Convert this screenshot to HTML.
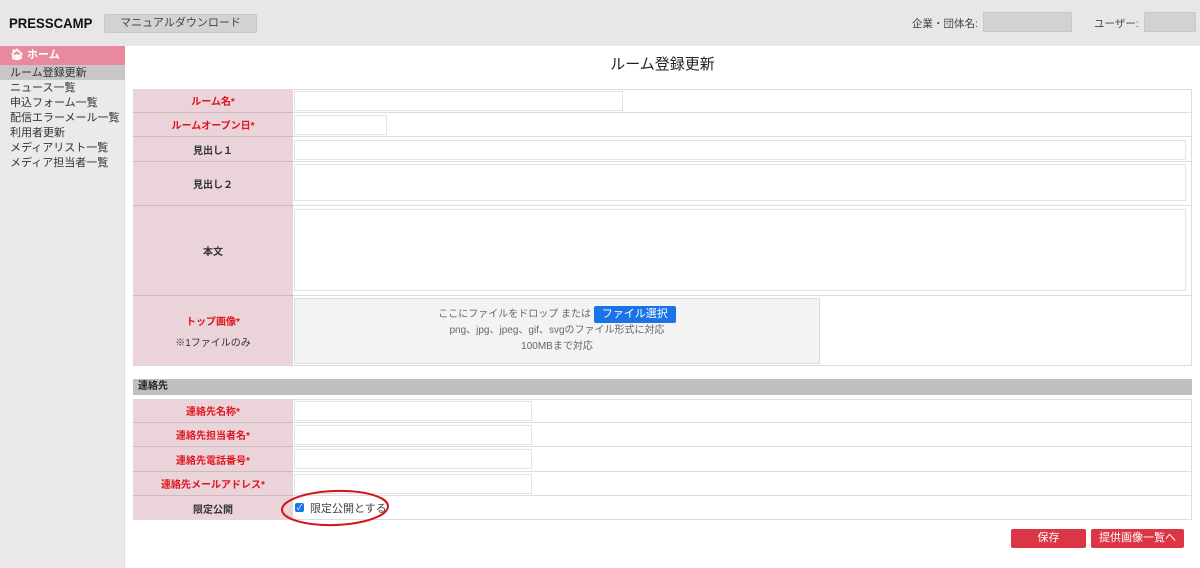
<!DOCTYPE html>
<html><head><meta charset="utf-8"><style>
*{box-sizing:border-box;margin:0;padding:0}
body{width:1200px;height:568px;overflow:hidden;background:#fff;font-family:"Liberation Sans","Noto Sans CJK JP",sans-serif;font-size:11px;color:#333;position:relative}
.a{position:absolute}
.hdr{left:0;top:0;width:1200px;height:46px;background:#e8e6e9}
.side{left:0;top:46px;width:125px;height:522px;background:#ebe9eb;border-right:1px solid #ddd}
.lab{position:absolute;left:133px;width:160px;background:#ead3d9;border-bottom:1px solid #c9bcc0;text-align:center;font-weight:bold;display:flex;align-items:center;justify-content:center;flex-direction:column;font-size:10px;color:#333}
.red{color:#e0141e}
.val{position:absolute;left:293px;width:899px;border-bottom:1px solid #ddd;border-right:1px solid #ddd}
.inp{position:absolute;background:#fff;border:1px solid #e3e3e3}
.btn{position:absolute;top:529px;height:19px;background:#dc3545;color:#fff;font-size:11px;text-align:center;line-height:19px;border-radius:2px}
</style></head><body>
<div class="a hdr"></div>
<div class="a" style="left:9px;top:15px;font-weight:bold;font-size:14px;color:#111;transform:scaleX(0.94);transform-origin:left">PRESSCAMP</div>
<div class="a" style="left:104px;top:14px;width:153px;height:19px;background:#d4d3d4;border:1px solid #c8c8c8;border-radius:2px;text-align:center;line-height:17px;font-size:11px;color:#444">マニュアルダウンロード</div>
<div class="a" style="left:983px;top:12px;width:89px;height:20px;background:#d3d2d3;border:1px solid #c8c8c8"></div>
<div class="a" style="left:1144px;top:12px;width:52px;height:20px;background:#d3d2d3;border:1px solid #c8c8c8"></div>
<div class="a" style="left:912px;top:16px;font-size:10.5px;color:#444;z-index:2">企業・団体名:</div>
<div class="a" style="left:1094px;top:16px;font-size:10.5px;color:#444;z-index:2">ユーザー:</div>

<div class="a side"></div>
<div class="a" style="left:0;top:46px;width:125px;height:19px;background:#e8899f;color:#fff;font-weight:bold;padding-left:10px;line-height:19px;font-size:11px">🏠︎ ホーム</div>
<div class="a" style="left:0;top:65px;width:125px;height:15px;background:#c8c6c8"></div>
<div class="a" style="left:10px;top:66px;line-height:15px;font-size:11px;color:#333">ルーム登録更新<br>ニュース一覧<br>申込フォーム一覧<br>配信エラーメール一覧<br>利用者更新<br>メディアリスト一覧<br>メディア担当者一覧</div>

<div class="a" style="left:125px;top:53px;width:1075px;text-align:center;font-size:15px;color:#222">ルーム登録更新</div>

<div class="a" style="left:133px;top:89px;width:1059px;height:277px;border:1px solid #ddd;border-bottom:none"></div>
<div class="lab red" style="top:89px;height:24px">ルーム名*</div>
<div class="lab red" style="top:113px;height:24px">ルームオープン日*</div>
<div class="lab" style="top:137px;height:25px">見出し１</div>
<div class="lab" style="top:162px;height:44px">見出し２</div>
<div class="lab" style="top:206px;height:90px">本文</div>
<div class="lab" style="top:296px;height:70px;border-bottom:none"><span class="red">トップ画像*</span><span style="font-weight:normal;margin-top:6px">※1ファイルのみ</span></div>
<div class="val" style="top:89px;height:24px"></div>
<div class="val" style="top:113px;height:24px"></div>
<div class="val" style="top:137px;height:25px"></div>
<div class="val" style="top:162px;height:44px"></div>
<div class="val" style="top:206px;height:90px"></div>
<div class="val" style="top:296px;height:70px;border-bottom:1px solid #ddd"></div>
<div class="inp" style="left:294px;top:91px;width:329px;height:20px"></div>
<div class="inp" style="left:294px;top:115px;width:93px;height:20px"></div>
<div class="inp" style="left:294px;top:140px;width:892px;height:20px"></div>
<div class="inp" style="left:294px;top:164px;width:892px;height:37px"></div>
<div class="inp" style="left:294px;top:209px;width:892px;height:82px"></div>
<div class="inp" style="left:294px;top:298px;width:526px;height:66px;background:#f4f3f4;border-color:#ddd"></div>
<div class="a" style="left:294px;top:306px;width:526px;text-align:center;font-size:10px;color:#666;line-height:16px">ここにファイルをドロップ または <span style="display:inline-block;background:#1a73e8;color:#fff;padding:0 8px;border-radius:2px;line-height:17px;font-size:11px">ファイル選択</span><br>png、jpg、jpeg、gif、svgのファイル形式に対応<br>100MBまで対応</div>

<div class="a" style="left:133px;top:379px;width:1059px;height:16px;background:#c0bfc0;font-weight:bold;font-size:10px;padding-left:5px;line-height:16px;color:#222">連絡先</div>
<div class="a" style="left:133px;top:399px;width:1059px;height:121px;border:1px solid #ddd"></div>
<div class="lab red" style="top:399px;height:24px">連絡先名称*</div>
<div class="lab red" style="top:423px;height:24px">連絡先担当者名*</div>
<div class="lab red" style="top:447px;height:25px">連絡先電話番号*</div>
<div class="lab red" style="top:472px;height:24px">連絡先メールアドレス*</div>
<div class="lab" style="top:496px;height:24px;border-bottom:none">限定公開</div>
<div class="val" style="top:399px;height:24px"></div>
<div class="val" style="top:423px;height:24px"></div>
<div class="val" style="top:447px;height:25px"></div>
<div class="val" style="top:472px;height:24px"></div>
<div class="inp" style="left:294px;top:401px;width:238px;height:20px"></div>
<div class="inp" style="left:294px;top:425px;width:238px;height:20px"></div>
<div class="inp" style="left:294px;top:449px;width:238px;height:20px"></div>
<div class="inp" style="left:294px;top:474px;width:238px;height:20px"></div>
<div class="a" style="left:295px;top:503px;width:9px;height:9px;background:#1a73e8;border-radius:2px;color:#fff;font-size:8px;line-height:9px;text-align:center">✓</div>
<div class="a" style="left:310px;top:500px;font-size:11px;color:#444">限定公開とする</div>
<svg class="a" style="left:280px;top:488px" width="112" height="44"><ellipse cx="55" cy="20" rx="53" ry="17" fill="none" stroke="#d3141c" stroke-width="2" transform="rotate(-2 55 20)"/></svg>

<div class="btn" style="left:1011px;width:75px">保存</div>
<div class="btn" style="left:1091px;width:93px">提供画像一覧へ</div>
</body></html>
